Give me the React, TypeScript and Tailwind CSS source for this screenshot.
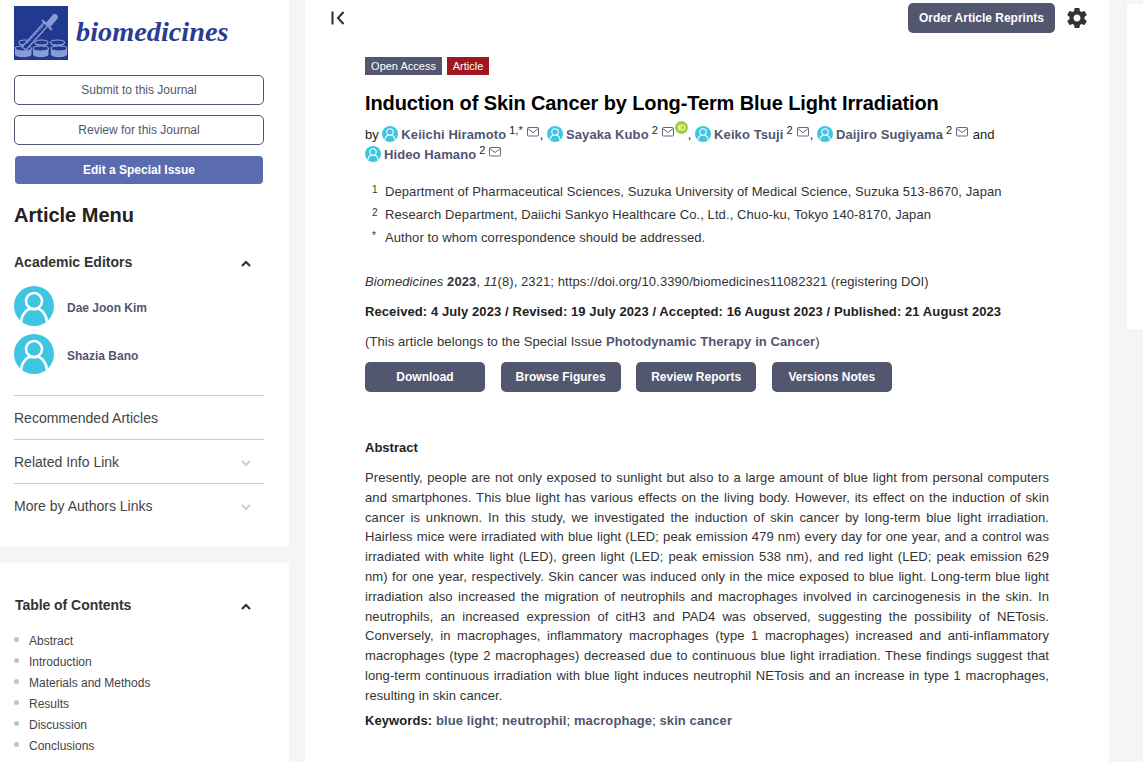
const sans = "font-['Liberation_Sans',Arial,sans-serif]";

function Person({ size, className = "" }: { size: number; className?: string }) {
  return (
    <svg width={size} height={size} viewBox="0 0 40 40" className={`shrink-0 ${className}`}>
      <circle cx="20" cy="20" r="20" fill="#3ec5e2" />
      <circle cx="20" cy="15" r="8" fill="#3ec5e2" stroke="#fff" strokeWidth="2.6" />
      <path d="M7 36c1-8 5-12 9-13.500c2.500 1 5.500 1 8 0c4 1.500 8 5.500 9 13.500" fill="#3ec5e2" stroke="#fff" strokeWidth="2.6" />
    </svg>
  );
}

function Mail() {
  return (
    <svg width="12" height="10" viewBox="0 0 12 10" className="inline-block align-[2px] ml-[4px] mr-[1px]" fill="none" stroke="#52566f" strokeWidth="0.9">
      <rect x="0.5" y="0.5" width="11" height="8.500" rx="1" />
      <path d="M0.800 1.500 6 5.500l5.200-4" />
    </svg>
  );
}

function Chevron({ up, muted }: { up?: boolean; muted?: boolean }) {
  return (
    <svg width="10" height="7" viewBox="0 0 10 7" fill="none" stroke={muted ? "#cfcfcf" : "#333"} strokeWidth="2.200" className={muted ? "mt-[3px]" : "mt-[2px]"}>
      <path d={up ? "M1 6l4-4 4 4" : "M1 1l4 4 4-4"} />
    </svg>
  );
}

function Author({ name, sup, orcid }: { name: string; sup: string; orcid?: boolean }) {
  return (
    <span className="whitespace-nowrap">
      <Person size={16} className="inline-block align-[-3px] mr-[3px]" />
      <span className="font-bold tracking-[0.1px] text-[#52566f]">{name}</span>
      <sup className="text-[11px] ml-[3px] text-[#222] leading-none">{sup}</sup>
      <Mail />
      {orcid && (
        <svg width="13" height="13" viewBox="0 0 13 13" className="inline-block align-[5px]">
          <circle cx="6.500" cy="6.500" r="6.500" fill="#a6ce39" />
          <rect x="3.500" y="4" width="1.200" height="5" fill="#fff" />
          <path d="M6 4h1.500a2.500 2.500 0 0 1 0 5H6z" fill="none" stroke="#fff" strokeWidth="1" />
        </svg>
      )}
    </span>
  );
}

function Logo() {
  const Dish = ({ x, y, w, h }: { x: number; y: number; w: number; h: number }) => (
    <g>
      <path d={`M${x} ${y + 2.500}v${h - 5}c0 3.500 ${w} 3.500 ${w} 0v-${h - 5}z`} fill="#8a9bd6" />
      <ellipse cx={x + w / 2} cy={y + 2.500} rx={w / 2} ry="2.500" fill="#21398f" stroke="#8a9bd6" strokeWidth="1.200" />
    </g>
  );
  return (
    <svg width="54" height="54" viewBox="0 0 54 54" className="shrink-0">
      <rect width="54" height="54" fill="#21398f" />
      <Dish x={5} y={34} w={12} h={6} />
      <Dish x={21} y={34} w={13} h={6} />
      <Dish x={36.500} y={34} w={14} h={6} />
      <Dish x={1} y={40} w={16.500} h={11} />
      <Dish x={19} y={40} w={15.500} h={11} />
      <Dish x={37} y={40} w={16} h={11} />
      <path d="M8 41 30.500 16l3.500 3.500L12 44z" fill="#21398f" stroke="#8a9bd6" strokeWidth="1.300" />
      <path d="M13 37 30 19" stroke="#8a9bd6" strokeWidth="1.200" strokeDasharray="2 1" />
      <path d="M28 14l10 10" stroke="#8a9bd6" strokeWidth="2" />
      <path d="M32 17l7-8.500c2-2.500 6.500 1.500 4.500 4L36.500 21z" fill="#8a9bd6" />
    </svg>
  );
}

function MenuRow({ label, chevron }: { label: string; chevron?: boolean }) {
  return (
    <div className="h-11 border-t border-[#cccccc] flex items-center justify-between pr-[13px] text-[14px] text-[#444]">
      <span className="pt-[2px]">{label}</span>
      {chevron && <Chevron muted />}
    </div>
  );
}

const DarkBtn = ({ label, w }: { label: string; w: string }) => (
  <div className={`${w} h-[30px] rounded-[5px] bg-[#52566f] text-white text-[12px] font-bold flex items-center justify-center`}>
    {label}
  </div>
);

export default function App() {
  return (
    <div className={`${sans} h-[762px] w-[1143px] overflow-hidden bg-[#f5f5f5] flex text-[#222]`}>
      <aside className="w-[289px] shrink-0 flex flex-col gap-4">
        <div className="bg-white h-[547px] shrink-0 px-[14px] pt-[6px]">
          <div className="flex items-center gap-2 h-[54px]">
            <Logo />
            <span className="font-['Liberation_Serif',serif] italic font-bold text-[28.300px] text-[#2b3d8f] -mt-[2px] leading-none">biomedicines</span>
          </div>
          <div className="w-[250px] mt-[15px] flex flex-col items-center gap-[10px] text-[12px] text-[#52566f]">
            <div className="w-full h-[30px] rounded-[5px] border border-[#52566f] flex items-center justify-center">Submit to this Journal</div>
            <div className="w-full h-[30px] rounded-[5px] border border-[#52566f] flex items-center justify-center">Review for this Journal</div>
            <div className="w-[248px] h-[28px] mt-px rounded-[4px] bg-[#5b6bb0] text-white font-bold flex items-center justify-center">Edit a Special Issue</div>
          </div>
          <h2 className="text-[20px] font-bold leading-none mt-[21px] text-[#222]">Article Menu</h2>
          <div className="w-[250px] flex items-center justify-between pr-[13px] mt-[29px] h-4 text-[14px] font-bold text-[#333]">
            <span>Academic Editors</span>
            <Chevron up />
          </div>
          <div className="mt-[16px] flex flex-col gap-2 text-[12px] font-bold text-[#52566f]">
            <div className="flex items-center gap-[13px]"><Person size={40} /><span className="pt-1">Dae Joon Kim</span></div>
            <div className="flex items-center gap-[13px]"><Person size={40} /><span className="pt-1">Shazia Bano</span></div>
          </div>
          <div className="w-[250px] mt-[21px]">
            <MenuRow label="Recommended Articles" />
            <MenuRow label="Related Info Link" chevron />
            <MenuRow label="More by Authors Links" chevron />
          </div>
        </div>
        <div className="bg-white flex-1 pl-[15px] pt-[34px]">
          <div className="w-[249px] flex items-center justify-between pr-[13px] h-4 text-[14px] tracking-[-0.05px] font-bold text-[#333]">
            <span>Table of Contents</span>
            <span className="mt-[1px]"><Chevron up /></span>
          </div>
          <ul className="mt-[17px] text-[12px] text-[#444]">
            {["Abstract", "Introduction", "Materials and Methods", "Results", "Discussion", "Conclusions"].map((t) => (
              <li key={t} className="h-[21px] flex items-center gap-[10px]">
                <span className="w-[5px] h-[5px] rounded-full bg-[#c4c4c4] -mt-[3px] -ml-px" />
                {t}
              </li>
            ))}
          </ul>
        </div>
      </aside>

      <main className="w-[804px] ml-4 shrink-0 bg-white">
        <div className="h-[57px] flex items-start justify-end relative pt-[3px] pr-[20px] gap-[10px]">
          <svg width="14" height="14" viewBox="0 0 14 14" fill="none" stroke="#333" strokeWidth="2.100" className="absolute left-[26px] top-[11px]">
            <path d="M1.500 0.500v13M12.500 1 7 7l5.500 6" />
          </svg>
          <div className="w-[147px] h-[30px] rounded-[5px] bg-[#52566f] text-white text-[12px] font-bold flex items-center justify-center">Order Article Reprints</div>
          <svg width="24" height="24" viewBox="0 0 24 24" className="mt-[3px]" fill="#333">
            <path d="M19.430 12.980c.04-.32.07-.64.07-.98s-.03-.66-.07-.98l2.110-1.650c.19-.15.24-.42.120-.64l-2-3.460c-.12-.22-.39-.3-.61-.22l-2.490 1c-.52-.4-1.080-.73-1.690-.98l-.38-2.650C14.460 2.180 14.250 2 14 2h-4c-.25 0-.46.18-.49.42l-.38 2.650c-.61.25-1.170.59-1.690.98l-2.490-1c-.23-.09-.49 0-.61.22l-2 3.460c-.13.22-.07.49.12.64l2.110 1.650c-.04.32-.07.65-.07.98s.03.66.07.98l-2.110 1.650c-.19.15-.24.42-.12.64l2 3.460c.12.22.39.3.61.22l2.490-1c.52.4 1.080.73 1.690.98l.38 2.650c.03.24.24.42.49.42h4c.25 0 .46-.18.49-.42l.38-2.650c.61-.25 1.170-.59 1.690-.98l2.490 1c.23.09.49 0 .61-.22l2-3.460c.12-.22.07-.49-.12-.64l-2.110-1.650zM12 15.500c-1.930 0-3.500-1.570-3.500-3.500s1.570-3.500 3.500-3.500 3.500 1.570 3.500 3.500-1.570 3.500-3.500 3.500z" />
          </svg>
        </div>
        <div className="w-[684px] ml-[60px]">
          <div className="flex gap-[5px] text-[11px] text-white h-[18px]">
            <span className="bg-[#52566f] w-[77px] flex items-center justify-center">Open Access</span>
            <span className="bg-[#a01622] w-[42px] flex items-center justify-center">Article</span>
          </div>
          <h1 className="text-[20px] font-bold tracking-[-0.1px] text-black leading-6 mt-4">Induction of Skin Cancer by Long-Term Blue Light Irradiation</h1>
          <div className="text-[13px] leading-5 mt-[6px]">
            by <Author name="Keiichi Hiramoto" sup="1,*" />, <Author name="Sayaka Kubo" sup="2" orcid />, <Author name="Keiko Tsuji" sup="2" />, <Author name="Daijiro Sugiyama" sup="2" /> and <Author name="Hideo Hamano" sup="2" />
          </div>
          <div className="mt-[15px] text-[13px] tracking-[0.09px] text-[#333]">
            {[
              ["1", "Department of Pharmaceutical Sciences, Suzuka University of Medical Science, Suzuka 513-8670, Japan"],
              ["2", "Research Department, Daiichi Sankyo Healthcare Co., Ltd., Chuo-ku, Tokyo 140-8170, Japan"],
              ["*", "Author to whom correspondence should be addressed."],
            ].map(([n, t]) => (
              <div key={n} className="flex h-[23px] items-center pl-[7px]">
                <span className="w-[13px] text-[10px] -mt-[5px]">{n}</span>
                {t}
              </div>
            ))}
          </div>
          <p className="mt-[23px] text-[13px] tracking-[0.09px] leading-5 text-[#333]">
            <i>Biomedicines</i> <b>2023</b>, <i>11</i>(8), 2321; https://doi.org/10.3390/biomedicines11082321 (registering DOI)
          </p>
          <p className="mt-[10px] text-[13px] tracking-[0.09px] font-bold leading-5 text-[#222]">
            Received: 4 July 2023 / Revised: 19 July 2023 / Accepted: 16 August 2023 / Published: 21 August 2023
          </p>
          <p className="mt-[10px] text-[13px] tracking-[0.09px] leading-5 text-[#333]">
            (This article belongs to the Special Issue <span className="text-[#52566f] font-bold">Photodynamic Therapy in Cancer</span>)
          </p>
          <div className="flex mt-[10px] gap-[15.600px]">
            <DarkBtn label="Download" w="w-[120px]" />
            <DarkBtn label="Browse Figures" w="w-[120px]" />
            <DarkBtn label="Review Reports" w="w-[120px]" />
            <DarkBtn label="Versions Notes" w="w-[120px]" />
          </div>
          <h3 className="text-[13px] font-bold text-[#222] mt-[48px] leading-4">Abstract</h3>
          <p className="text-[13px] tracking-[0.09px] leading-[19.800px] text-justify text-[#333] mt-[12px]">
            Presently, people are not only exposed to sunlight but also to a large amount of blue light from personal computers and smartphones. This blue light has various effects on the living body. However, its effect on the induction of skin cancer is unknown. In this study, we investigated the induction of skin cancer by long-term blue light irradiation. Hairless mice were irradiated with blue light (LED; peak emission 479 nm) every day for one year, and a control was irradiated with white light (LED), green light (LED; peak emission 538 nm), and red light (LED; peak emission 629 nm) for one year, respectively. Skin cancer was induced only in the mice exposed to blue light. Long-term blue light irradiation also increased the migration of neutrophils and macrophages involved in carcinogenesis in the skin. In neutrophils, an increased expression of citH3 and PAD4 was observed, suggesting the possibility of NETosis. Conversely, in macrophages, inflammatory macrophages (type 1 macrophages) increased and anti-inflammatory macrophages (type 2 macrophages) decreased due to continuous blue light irradiation. These findings suggest that long-term continuous irradiation with blue light induces neutrophil NETosis and an increase in type 1 macrophages, resulting in skin cancer.
          </p>
          <p className="text-[13px] tracking-[0.09px] font-bold mt-[5px] leading-5 text-[#222]">
            Keywords: <span className="text-[#52566f]">blue light</span><span className="font-normal">;</span> <span className="text-[#52566f]">neutrophil</span><span className="font-normal">;</span> <span className="text-[#52566f]">macrophage</span><span className="font-normal">;</span> <span className="text-[#52566f]">skin cancer</span>
          </p>
        </div>
      </main>
      <div className="ml-[18px] mt-1 w-4 h-[325px] bg-white" />
    </div>
  );
}
